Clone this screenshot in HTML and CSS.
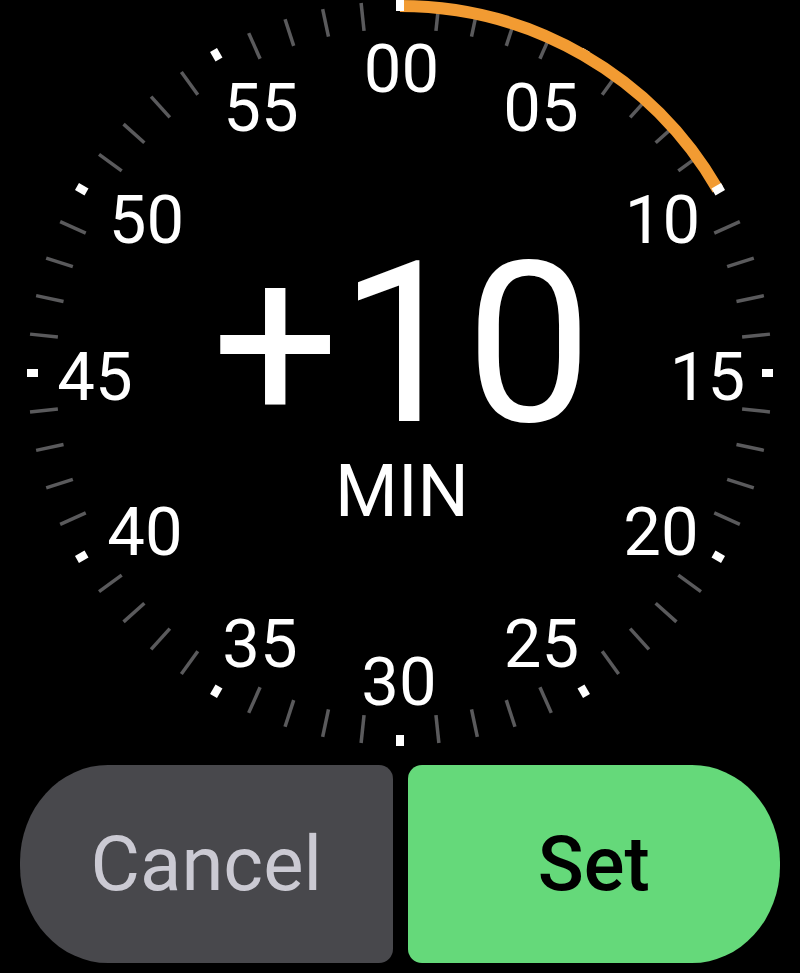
FILE: index.html
```html
<!DOCTYPE html>
<html lang="en">
<head>
<meta charset="utf-8">
<title>Timer</title>
<link rel="stylesheet" href="styles.css">
</head>
<body>
<main class="screen">
  <div class="dial-wrap">
    <svg class="dial" width="800" height="765" viewBox="0 0 800 765" xmlns="http://www.w3.org/2000/svg">
      <g class="face" transform="translate(400 373)">
        <g class="minor">
          <line x1="0" y1="-372" x2="0" y2="-344" transform="rotate(6)"/>
          <line x1="0" y1="-372" x2="0" y2="-344" transform="rotate(12)"/>
          <line x1="0" y1="-372" x2="0" y2="-344" transform="rotate(18)"/>
          <line x1="0" y1="-372" x2="0" y2="-344" transform="rotate(24)"/>
          <line x1="0" y1="-372" x2="0" y2="-344" transform="rotate(36)"/>
          <line x1="0" y1="-372" x2="0" y2="-344" transform="rotate(42)"/>
          <line x1="0" y1="-372" x2="0" y2="-344" transform="rotate(48)"/>
          <line x1="0" y1="-372" x2="0" y2="-344" transform="rotate(54)"/>
          <line x1="0" y1="-372" x2="0" y2="-344" transform="rotate(66)"/>
          <line x1="0" y1="-372" x2="0" y2="-344" transform="rotate(72)"/>
          <line x1="0" y1="-372" x2="0" y2="-344" transform="rotate(78)"/>
          <line x1="0" y1="-372" x2="0" y2="-344" transform="rotate(84)"/>
          <line x1="0" y1="-372" x2="0" y2="-344" transform="rotate(96)"/>
          <line x1="0" y1="-372" x2="0" y2="-344" transform="rotate(102)"/>
          <line x1="0" y1="-372" x2="0" y2="-344" transform="rotate(108)"/>
          <line x1="0" y1="-372" x2="0" y2="-344" transform="rotate(114)"/>
          <line x1="0" y1="-372" x2="0" y2="-344" transform="rotate(126)"/>
          <line x1="0" y1="-372" x2="0" y2="-344" transform="rotate(132)"/>
          <line x1="0" y1="-372" x2="0" y2="-344" transform="rotate(138)"/>
          <line x1="0" y1="-372" x2="0" y2="-344" transform="rotate(144)"/>
          <line x1="0" y1="-372" x2="0" y2="-344" transform="rotate(156)"/>
          <line x1="0" y1="-372" x2="0" y2="-344" transform="rotate(162)"/>
          <line x1="0" y1="-372" x2="0" y2="-344" transform="rotate(168)"/>
          <line x1="0" y1="-372" x2="0" y2="-344" transform="rotate(174)"/>
          <line x1="0" y1="-372" x2="0" y2="-344" transform="rotate(186)"/>
          <line x1="0" y1="-372" x2="0" y2="-344" transform="rotate(192)"/>
          <line x1="0" y1="-372" x2="0" y2="-344" transform="rotate(198)"/>
          <line x1="0" y1="-372" x2="0" y2="-344" transform="rotate(204)"/>
          <line x1="0" y1="-372" x2="0" y2="-344" transform="rotate(216)"/>
          <line x1="0" y1="-372" x2="0" y2="-344" transform="rotate(222)"/>
          <line x1="0" y1="-372" x2="0" y2="-344" transform="rotate(228)"/>
          <line x1="0" y1="-372" x2="0" y2="-344" transform="rotate(234)"/>
          <line x1="0" y1="-372" x2="0" y2="-344" transform="rotate(246)"/>
          <line x1="0" y1="-372" x2="0" y2="-344" transform="rotate(252)"/>
          <line x1="0" y1="-372" x2="0" y2="-344" transform="rotate(258)"/>
          <line x1="0" y1="-372" x2="0" y2="-344" transform="rotate(264)"/>
          <line x1="0" y1="-372" x2="0" y2="-344" transform="rotate(276)"/>
          <line x1="0" y1="-372" x2="0" y2="-344" transform="rotate(282)"/>
          <line x1="0" y1="-372" x2="0" y2="-344" transform="rotate(288)"/>
          <line x1="0" y1="-372" x2="0" y2="-344" transform="rotate(294)"/>
          <line x1="0" y1="-372" x2="0" y2="-344" transform="rotate(306)"/>
          <line x1="0" y1="-372" x2="0" y2="-344" transform="rotate(312)"/>
          <line x1="0" y1="-372" x2="0" y2="-344" transform="rotate(318)"/>
          <line x1="0" y1="-372" x2="0" y2="-344" transform="rotate(324)"/>
          <line x1="0" y1="-372" x2="0" y2="-344" transform="rotate(336)"/>
          <line x1="0" y1="-372" x2="0" y2="-344" transform="rotate(342)"/>
          <line x1="0" y1="-372" x2="0" y2="-344" transform="rotate(348)"/>
          <line x1="0" y1="-372" x2="0" y2="-344" transform="rotate(354)"/>
        </g>
        <g class="major">
          <rect x="-4" y="-373" width="8" height="11" transform="rotate(30)"/>
        </g>
        <path class="progress" d="M0,-367 A367,367 0 0 1 317.83,-183.5"/>
        <g class="major">
          <rect x="-4" y="-373" width="8" height="11"/>
          <rect x="-4" y="-373" width="8" height="11" transform="rotate(60)"/>
          <rect x="-4" y="-373" width="8" height="11" transform="rotate(90)"/>
          <rect x="-4" y="-373" width="8" height="11" transform="rotate(120)"/>
          <rect x="-4" y="-373" width="8" height="11" transform="rotate(150)"/>
          <rect x="-4" y="-373" width="8" height="11" transform="rotate(180)"/>
          <rect x="-4" y="-373" width="8" height="11" transform="rotate(210)"/>
          <rect x="-4" y="-373" width="8" height="11" transform="rotate(240)"/>
          <rect x="-4" y="-373" width="8" height="11" transform="rotate(270)"/>
          <rect x="-4" y="-373" width="8" height="11" transform="rotate(300)"/>
          <rect x="-4" y="-373" width="8" height="11" transform="rotate(330)"/>
        </g>
      </g>
      <g class="labels">
        <text x="401.5" y="92">00</text>
        <text x="541" y="131">05</text>
        <text x="662.5" y="243">10</text>
        <text x="707.5" y="400">15</text>
        <text x="661" y="555">20</text>
        <text x="541.5" y="667">25</text>
        <text x="399" y="705">30</text>
        <text x="260" y="667">35</text>
        <text x="145" y="555">40</text>
        <text x="95" y="400">45</text>
        <text x="146.5" y="243">50</text>
        <text x="261" y="131">55</text>
      </g>
    </svg>
    <div class="readout">
      <div class="value">+10</div>
      <div class="unit">MIN</div>
    </div>
  </div>
  <div class="actions">
    <button class="btn btn-cancel" type="button">Cancel</button>
    <button class="btn btn-set" type="button">Set</button>
  </div>
</main>
</body>
</html>
```
FILE: styles.css
```css
* {
  box-sizing: border-box;
}

html, body {
  margin: 0;
  padding: 0;
  background: #000;
}

body {
  font-family: Roboto, "Liberation Sans", sans-serif;
}

.screen {
  width: 800px;
  height: 973px;
  background: #000;
  display: flex;
  flex-direction: column;
  overflow: hidden;
}

.dial-wrap {
  position: relative;
  width: 800px;
  height: 765px;
  flex: none;
}

.dial {
  display: block;
}

.minor line {
  stroke: #5a5a5c;
  stroke-width: 3.5;
}

.progress {
  fill: none;
  stroke: #f29b32;
  stroke-width: 12;
}

.major rect {
  fill: #ffffff;
}

.labels text {
  font-family: Roboto, "Liberation Sans", sans-serif;
  font-size: 67px;
  fill: #ffffff;
  text-anchor: middle;
}

.readout {
  position: absolute;
  top: 259px;
  left: 0;
  width: 800px;
  display: flex;
  flex-direction: column;
  align-items: center;
  gap: 33px;
  color: #fff;
  font-family: Roboto, "Liberation Sans", sans-serif;
}

.value {
  font-size: 225px;
  line-height: 170px;
  height: 170px;
  padding-left: 4px;
}

.unit {
  font-size: 72px;
  line-height: 60px;
  height: 60px;
  padding-left: 4px;
}

.actions {
  display: flex;
  gap: 15px;
  padding: 0 20px;
  height: 198px;
  flex: none;
}

.btn {
  flex: 1;
  height: 198px;
  border: 0;
  margin: 0;
  padding: 0;
  display: flex;
  align-items: center;
  justify-content: center;
  font-family: Roboto, "Liberation Sans", sans-serif;
  font-size: 76px;
  line-height: 1;
}

.btn-cancel {
  background: #48484c;
  color: #cbcad3;
  font-weight: 400;
  border-radius: 88px 14px 14px 88px / 97px 14px 14px 97px;
}

.btn-set {
  background: #65d97a;
  color: #000;
  font-weight: 500;
  border-radius: 14px 88px 88px 14px / 14px 97px 97px 14px;
}
```
